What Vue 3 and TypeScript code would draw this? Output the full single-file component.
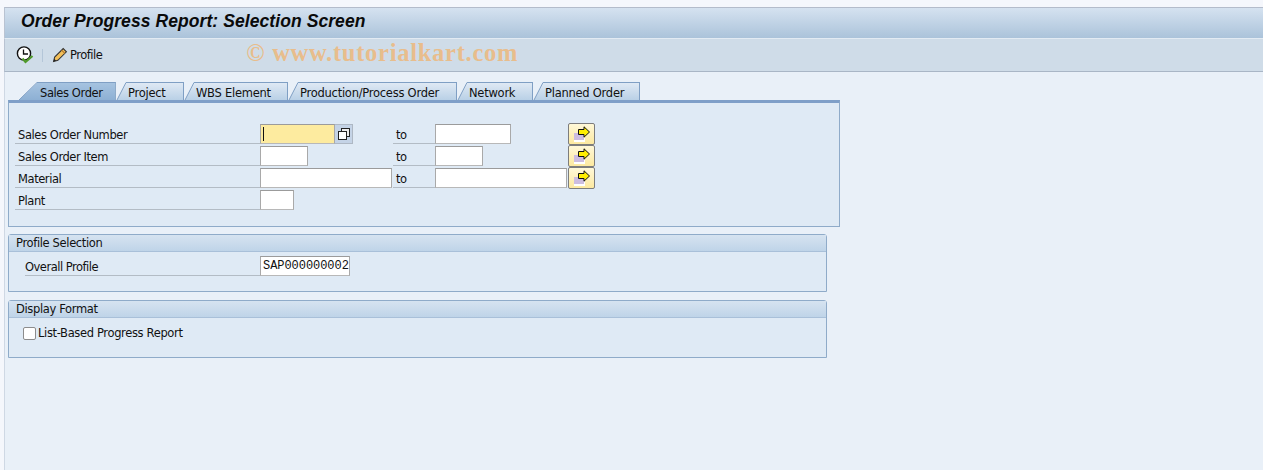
<script setup lang="ts">
interface Tab { label: string; width: number; active?: boolean }
const tabs: Tab[] = [
  { label: 'Sales Order', width: 78, active: true },
  { label: 'Project', width: 57 },
  { label: 'WBS Element', width: 93 },
  { label: 'Production/Process Order', width: 158 },
  { label: 'Network', width: 65 },
  { label: 'Planned Order', width: 96 },
]
const rows = [
  { label: 'Sales Order Number', low: 75, f4: true, high: 76, more: true },
  { label: 'Sales Order Item', low: 48, high: 48, more: true },
  { label: 'Material', low: 132, high: 132, more: true },
  { label: 'Plant', low: 34 },
]
</script>

<template>
  <div class="screen">
    <header class="title-bar"><h1>Order Progress Report: Selection Screen</h1></header>
    <div class="toolbar">
      <svg class="ico-clock" width="18" height="18" viewBox="0 0 18 18">
        <circle cx="8" cy="7.5" r="6.6" fill="#fff" stroke="#111" stroke-width="1.4" />
        <path d="M7.5 3.5V8H12" fill="none" stroke="#111" stroke-width="1.3" />
        <path d="M6.5 12.5l3 3.5 7-6" fill="none" stroke="#4f9a2a" stroke-width="2.2" />
      </svg>
      <span class="sep"></span>
      <svg class="ico-pen" width="16" height="16" viewBox="0 0 15 15">
        <path d="M1.5 13.5l1-4L10.5 1.5l3 3-8 8z" fill="#f3c05a" stroke="#333" stroke-width="1" />
        <path d="M9 3l3 3" stroke="#b5762a" stroke-width="1" />
        <path d="M1.5 13.5l.6-2.4 1.8 1.8z" fill="#222" />
      </svg>
      <span class="tool-text">Profile</span>
      <span class="watermark">© www.tutorialkart.com</span>
    </div>

    <main class="content">
      <nav class="tabs">
        <div v-for="(t, i) in tabs" :key="t.label" class="tab" :class="{ active: t.active }" :style="{ width: t.width + 'px' }">
          <svg class="slant" :width="t.active ? 19 : 11" height="18" :viewBox="t.active ? '0 0 19 18' : '0 0 11 18'">
            <defs>
              <linearGradient :id="'tabgrad' + i" x1="0" y1="0" x2="0" y2="1">
                <stop offset="0" :stop-color="t.active ? '#a6c3e0' : '#dfe9f4'" />
                <stop offset="1" :stop-color="t.active ? '#8db0d4' : '#b9d0e6'" />
              </linearGradient>
            </defs>
            <path v-if="t.active" d="M0 18L18 1H19V18Z" :fill="'url(#tabgrad' + i + ')'" />
            <path v-if="t.active" d="M0 18L18 0.5H19" stroke="#7f9fc4" fill="none" />
            <path v-if="!t.active" d="M1 18L10 1H11V18Z" :fill="'url(#tabgrad' + i + ')'" />
            <path v-if="!t.active" d="M1 18L10 .5H11" stroke="#7f9fc4" fill="none" />
          </svg>
          <span>{{ t.label }}</span>
        </div>
      </nav>

      <section class="tab-panel">
        <div v-for="r in rows" :key="r.label" class="row">
          <label class="lbl">{{ r.label }}</label>
          <div class="low">
            <span class="field" :class="{ req: r.f4 }" :style="{ width: r.low + 'px' }"><i v-if="r.f4" class="caret"></i></span>
            <span v-if="r.f4" class="f4">
              <svg width="12" height="12" viewBox="0 0 12 12">
                <rect x="3.5" y=".5" width="8" height="8" fill="#eee" stroke="#222" />
                <rect x=".5" y="3.5" width="8" height="8" fill="#fff" stroke="#222" />
              </svg>
            </span>
          </div>
          <label v-if="r.high" class="to">to</label>
          <div v-if="r.high" class="high"><span class="field" :style="{ width: r.high + 'px' }"></span></div>
          <button v-if="r.more" class="more">
            <svg width="18" height="16" viewBox="0 0 18 16">
              <rect x="1" y="7" width="11" height="9" fill="#fff" />
              <rect x="1" y="7" width="10" height="7" fill="#cdbde0" />
              <path d="M5.5 3.5H11V.8L16.5 6L11 11.2V8.5H5.5Z" fill="#ffee00" stroke="#111" stroke-width="1" />
            </svg>
          </button>
        </div>
      </section>

      <section class="group first">
        <h2>Profile Selection</h2>
        <div class="group-body one">
          <label class="lbl profile">Overall Profile</label>
          <span class="field mono">SAP000000002</span>
        </div>
      </section>

      <section class="group">
        <h2>Display Format</h2>
        <div class="group-body two">
          <span class="check"></span>
          <label>List-Based Progress Report</label>
        </div>
      </section>
    </main>
  </div>
</template>

<style>
html, body { margin: 0; background: #e9f0f8; overflow: hidden; }
</style>

<style scoped>
.screen {
  width: 1263px;
  height: 470px;
  box-sizing: border-box;
  padding: 7px 0 0 4px;
  background-color: #e9f0f8;
  background-image: linear-gradient(#f5f7fc, #f5f7fc), linear-gradient(#f5f7fc, #f5f7fc);
  background-size: 100% 7px, 4px 100%;
  background-repeat: no-repeat;
  font: 12px "DejaVu Sans", sans-serif;
  color: #111;
  overflow: hidden;
}
.title-bar {
  height: 32px;
  box-sizing: border-box;
  border-top: 1px solid #b4bccb;
  border-left: 1px solid #b9c3d2;
  border-bottom: 1px solid #e3ebf3;
  background: linear-gradient(#d5e2f0, #abc3da);
  padding-left: 16px;
}
h1 {
  margin: 0;
  font: italic bold 17.5px/26px "Liberation Sans", sans-serif;
  letter-spacing: .08px;
  color: #0a0a0a;
}
.toolbar {
  height: 33px;
  box-sizing: border-box;
  border-left: 1px solid #b9c3d2;
  border-bottom: 1px solid #a9b6c6;
  background: #cfdce8;
  display: flex;
  align-items: center;
  padding-left: 11px;
}
.ico-clock { margin-top: -1px; }
.sep { width: 1px; height: 13px; background: #b4c6d8; margin: 0 9px 0 8px; }
.ico-pen { margin-top: -1px; }
.tool-text { margin-left: 2px; font-size: 11.5px; letter-spacing: -.5px; }
.watermark {
  margin-left: 144px;
  margin-top: -4px;
  font: bold 24.5px "Liberation Serif", serif;
  color: #e8bd8c;
  letter-spacing: .73px;
  white-space: nowrap;
}
.content {
  padding: 10px 0 0 2px;
  border-left: 1px solid #cfd8e4;
  height: 398px;
  box-sizing: border-box;
}
.tabs {
  display: flex;
  height: 18px;
  padding-left: 12px;
}
.tab {
  position: relative;
  height: 18px;
  box-sizing: border-box;
  display: flex;
  align-items: center;
  background: linear-gradient(#dfe9f4, #b9d0e6);
  border-top: 1px solid #7f9fc4;
  border-right: 1px solid #7f9fc4;
  font-size: 11.5px;
  letter-spacing: -.25px;
  padding: 3px 0 0 1px;
  margin-left: 11px;
  white-space: nowrap;
  color: #111;
  flex: none;
}
.tab.active {
  background: linear-gradient(#a6c3e0, #8db0d4);
  margin-left: 19px;
  padding-left: 2px;
  letter-spacing: -.4px;
  border-right-color: #8eabc9;
}
.slant { position: absolute; right: 100%; top: -1px; display: block; }
.tab-panel {
  width: 832px;
  height: 127px;
  box-sizing: border-box;
  border: 1px solid #8fabc9;
  border-top: 3px solid #7f9fc8;
  background: #dfeaf5;
  margin-left: 1px;
  padding: 21px 0 0 6px;
}
.row {
  display: grid;
  grid-template-columns: 245px 133px 42px 133px 27px;
  height: 22px;
}
.lbl, .to {
  height: 19px;
  border-bottom: 1px solid #b3bcc5;
  line-height: 23px;
  letter-spacing: -.42px;
  font-size: 11.5px;
  padding-left: 3px;
  box-sizing: content-box;
}
.low, .high { display: flex; align-items: flex-start; }
.field {
  display: block;
  height: 20px;
  box-sizing: border-box;
  background: #fff;
  border: 1px solid #a9a9a9;
  border-top-color: #9b9b9b;
  border-bottom-color: #b8b8b8;
  position: relative;
}
.req { background: #fdeb9f; }
.caret { position: absolute; left: 2px; top: 2px; width: 1px; height: 14px; background: #111; }
.f4 {
  width: 18px;
  height: 20px;
  box-sizing: border-box;
  background: #c4d3e6;
  border: 1px solid #aeb8c4;
  border-left: 0;
  display: flex;
  align-items: center;
  justify-content: center;
}
.more {
  grid-column: 5;
  grid-row: 1;
  width: 27px;
  height: 22px;
  margin: -1px 0 0 0;
  padding: 0;
  box-sizing: border-box;
  background: linear-gradient(#fff8d8, #fde9a0);
  border: 1px solid #7d7d7d;
  border-radius: 2px;
  display: flex;
  align-items: center;
  justify-content: center;
}
.group {
  width: 819px;
  height: 58px;
  box-sizing: border-box;
  margin: 8px 0 0 1px;
  border: 1px solid #8fabc9;
  border-radius: 3px 3px 0 0;
  background: #dfeaf5;
}
.group.first { margin-top: 7px; }
h2 {
  margin: 0;
  height: 16px;
  font-weight: normal;
  font-size: 11.5px;
  letter-spacing: -.35px;
  line-height: 16px;
  padding-left: 7px;
  background: linear-gradient(#d6e3f0, #bfd4e8);
  border-bottom: 1px solid #a9c0d9;
}
.group-body { display: flex; }
.group-body.one { padding: 4px 0 0 16px; height: 20px; }
.profile { width: 235px; padding-left: 0; flex: none; line-height: 22px; letter-spacing: -.5px; }
.mono {
  width: 90px;
  font: 12px/19px "Liberation Mono", monospace;
  letter-spacing: -.05px;
  padding-left: 2px;
  white-space: nowrap;
  overflow: hidden;
  color: #111;
}
.group-body.two { padding: 8px 0 0 14px; align-items: center; font-size: 11.5px; letter-spacing: -.35px; }
.check {
  width: 13px;
  height: 13px;
  box-sizing: border-box;
  background: #fff;
  border: 1px solid #8c8c8c;
  border-radius: 2px;
  margin-right: 2px;
}
</style>
